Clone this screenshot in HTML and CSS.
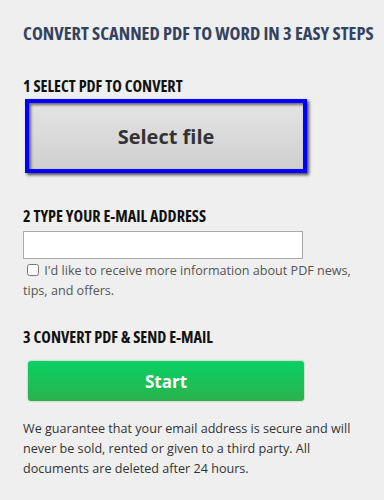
FILE: index.html
```html
<!DOCTYPE html>
<html lang="en">
<head>
    <meta charset="UTF-8">
    <meta name="viewport" content="width=device-width, initial-scale=1.0">
    <title>Convert scanned PDF to Word</title>
    <link rel="stylesheet" href="styles.css">
</head>
<body>
    <div class="converter">
        <h1 class="title">Convert scanned PDF to Word in 3 easy steps</h1>

        <div class="step">
            <h2>1 Select PDF to convert</h2>
            <button class="select-btn" type="button">Select file</button>
        </div>

        <div class="step step-mail">
            <h2>2 Type your e-mail address</h2>
            <input class="email" type="text">
            <label class="newsletter">
                <input type="checkbox">
                I'd like to receive more information about PDF news, tips, and offers.
            </label>
        </div>

        <div class="step step-start">
            <h2>3 Convert PDF &amp; send e-mail</h2>
            <button class="start-btn" type="button">Start</button>
            <p class="note">We guarantee that your email address is secure and will never be sold, rented or given to a third party. All documents are deleted after 24 hours.</p>
        </div>
    </div>
</body>
</html>
```

FILE: styles.css
```css
body {
    margin: 0;
    padding: 0;
    background-color: #efefef;
    font-family: "Open Sans", Arial, sans-serif;
    color: #333;
}
.converter {
    padding: 21px 10px 0 23px;
}
.title,
.step h2 {
    font-family: "Open Sans", "Liberation Sans Narrow", sans-serif;
    font-stretch: 75%;
    font-weight: 700;
    text-transform: uppercase;
    margin: 0;
}
.title {
    font-size: 18.4px;
    line-height: 24px;
    color: #33425e;
    margin-bottom: 30px;
}
.step h2 {
    font-size: 16.2px;
    line-height: 22px;
    color: #111;
}
.select-btn {
    display: block;
    margin: 2px 0 0 2px;
    width: 282px;
    height: 74px;
    border: 4px solid #0000ff;
    background: linear-gradient(#e4e4e4, #cfcfcf);
    box-shadow: 2px 2px 3px rgba(0, 0, 0, 0.7), inset 2px 2px 3px rgba(0, 0, 0, 0.55);
    font-family: "Open Sans", sans-serif;
    font-weight: 700;
    font-size: 20px;
    color: #333;
    cursor: pointer;
}
.step-mail {
    margin-top: 32px;
}
.email {
    display: block;
    box-sizing: border-box;
    width: 280px;
    height: 28px;
    margin-top: 4px;
    border: 1px solid #aaa;
    background: #fff;
    padding: 2px 6px;
}
.newsletter {
    display: block;
    font-size: 12.6px;
    line-height: 20px;
    color: #555;
    margin-top: 2px;
    width: 345px;
}
.newsletter input {
    margin: 0 2px 0 4px;
    width: 12px;
    height: 12px;
    vertical-align: -1px;
}
.step-start {
    margin-top: 25px;
}
.start-btn {
    display: block;
    margin: 13px 0 0 5px;
    width: 276px;
    height: 40px;
    border: 0;
    border-radius: 3px;
    background: linear-gradient(#08d163, #2bb24d);
    box-shadow: 0 0 2px rgba(0, 0, 0, 0.35);
    color: #fff;
    font-family: "Open Sans", sans-serif;
    font-weight: 700;
    font-size: 17px;
    cursor: pointer;
}
.note {
    margin: 18px 0 0;
    font-size: 12.6px;
    line-height: 20px;
    color: #333;
    width: 345px;
}
```
